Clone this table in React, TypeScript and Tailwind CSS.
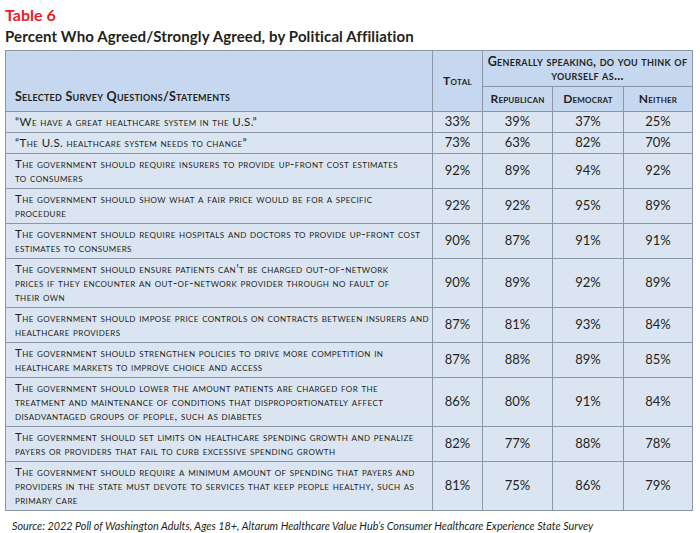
import React from "react";

const rows: { lines: string[]; values: number[] }[] = [
  { lines: ["“We have a great healthcare system in the U.S.”"], values: [33, 39, 37, 25] },
  { lines: ["“The U.S. healthcare system needs to change”"], values: [73, 63, 82, 70] },
  {
    lines: ["The government should require insurers to provide up-front cost estimates", "to consumers"],
    values: [92, 89, 94, 92],
  },
  {
    lines: ["The government should show what a fair price would be for a specific", "procedure"],
    values: [92, 92, 95, 89],
  },
  {
    lines: ["The government should require hospitals and doctors to provide up-front cost", "estimates to consumers"],
    values: [90, 87, 91, 91],
  },
  {
    lines: [
      "The government should ensure patients can’t be charged out-of-network",
      "prices if they encounter an out-of-network provider through no fault of",
      "their own",
    ],
    values: [90, 89, 92, 89],
  },
  {
    lines: ["The government should impose price controls on contracts between insurers and", "healthcare providers"],
    values: [87, 81, 93, 84],
  },
  {
    lines: ["The government should strengthen policies to drive more competition in", "healthcare markets to improve choice and access"],
    values: [87, 88, 89, 85],
  },
  {
    lines: [
      "The government should lower the amount patients are charged for the",
      "treatment and maintenance of conditions that disproportionately affect",
      "disadvantaged groups of people, such as diabetes",
    ],
    values: [86, 80, 91, 84],
  },
  {
    lines: [
      "The government should set limits on healthcare spending growth and penalize",
      "payers or providers that fail to curb excessive spending growth",
    ],
    values: [82, 77, 88, 78],
  },
  {
    lines: [
      "The government should require a minimum amount of spending that payers and",
      "providers in the state must devote to services that keep people healthy, such as",
      "primary care",
    ],
    values: [81, 75, 86, 79],
  },
];

export default function App() {
  return (
    <div className="w-[700px] h-[533px] bg-white px-[5px] pt-[5px] font-['Lato','Liberation_Sans',sans-serif] text-[#231f20]">
      <div className="text-[16px] leading-[20px] font-bold text-[#e5202a]">Table 6</div>
      <div className="text-[15px] leading-[22px] font-bold tracking-[0.12px]">
        Percent Who Agreed/Strongly Agreed, by Political Affiliation
      </div>

      <table className="mt-[3px] w-[687px] table-fixed border-collapse border border-[#8b97a6]">
        <colgroup>
          <col className="w-[427px]" />
          <col className="w-[50px]" />
          <col className="w-[70px]" />
          <col className="w-[71px]" />
          <col className="w-[69px]" />
        </colgroup>
        <thead className="bg-[#c6d8ef] [font-variant:small-caps] font-bold text-[12px]">
          <tr className="h-[36px]">
            <th rowSpan={2} className="border border-[#8b97a6] align-bottom text-left pl-[9px] pb-[4px] text-[12.5px] font-bold tracking-[0.25px]">
              Selected Survey Questions/Statements
            </th>
            <th rowSpan={2} className="border border-[#8b97a6] align-middle text-center font-bold tracking-[0.3px]">
              Total
            </th>
            <th colSpan={3} className="border border-[#8b97a6] text-center leading-[14px] text-[12.5px] tracking-[0.3px] font-bold">
              Generally speaking, do you think of
              <br />
              yourself as...
            </th>
          </tr>
          <tr className="h-[25px]">
            <th className="border border-[#8b97a6] text-center font-bold tracking-[0.2px]">Republican</th>
            <th className="border border-[#8b97a6] text-center font-bold tracking-[0.2px]">Democrat</th>
            <th className="border border-[#8b97a6] text-center font-bold tracking-[0.2px]">Neither</th>
          </tr>
        </thead>
        <tbody className="bg-[#dbe5f2]">
          {rows.map((row, i) => (
            <tr key={i}>
              <td className="border border-[#8b97a6] pl-[9px] py-[3px] text-[11.5px] leading-[14px] tracking-[0.4px] [font-variant:small-caps] whitespace-nowrap">
                {row.lines.map((line, j) => (
                  <div key={j}>{line}</div>
                ))}
              </td>
              {row.values.map((v, j) => (
                <td key={j} className="border border-[#8b97a6] text-center align-middle text-[13px]">
                  {v}%
                </td>
              ))}
            </tr>
          ))}
        </tbody>
      </table>

      <div className="mt-[7px] pl-[7px] text-[10.8px] italic">
        Source: 2022 Poll of Washington Adults, Ages 18+, Altarum Healthcare Value Hub’s Consumer Healthcare Experience State Survey
      </div>
    </div>
  );
}
